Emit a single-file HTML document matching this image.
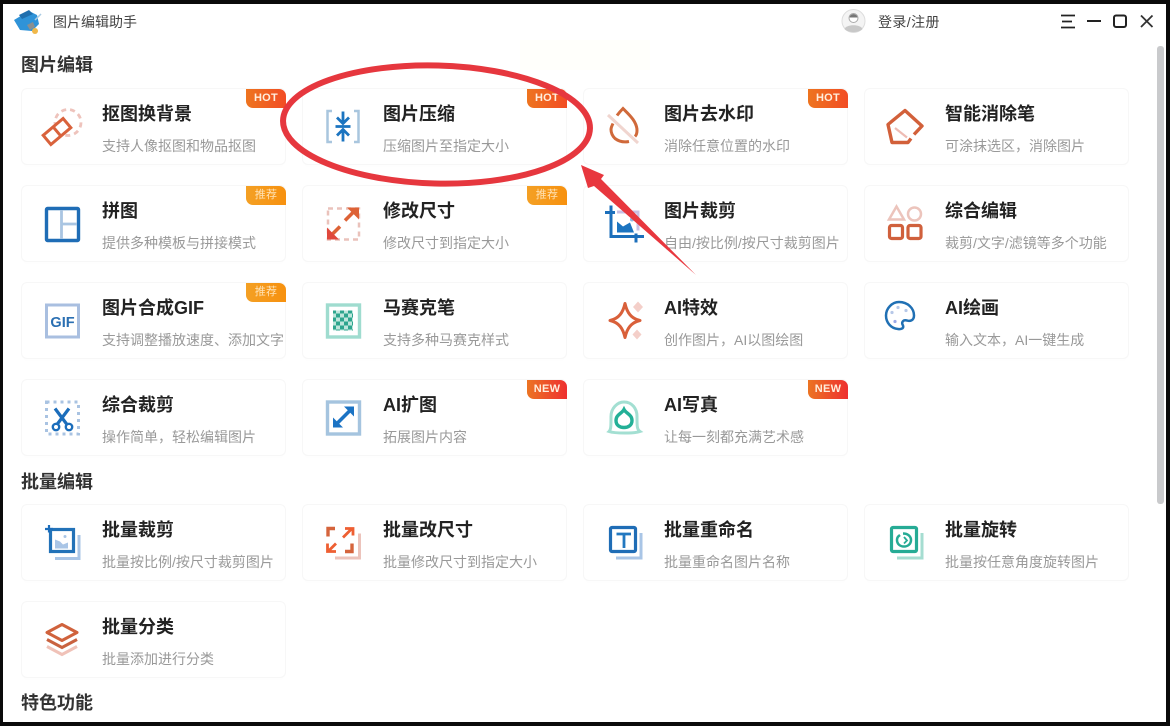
<!DOCTYPE html>
<html lang="zh"><head><meta charset="utf-8"><title>图片编辑助手</title>
<style>
*{margin:0;padding:0;box-sizing:border-box}
html,body{width:1170px;height:726px;overflow:hidden;background:#0a0a0a}
body{position:relative;font-family:"Liberation Sans","Noto Sans CJK SC",sans-serif}
#wrap{position:absolute;left:0;top:0;width:1170px;height:726px;filter:blur(.3px)}
#win{position:absolute;left:3px;top:4px;width:1163px;height:718px;background:#fff}
#ghost{position:absolute;left:520px;top:40px;width:130px;height:30px;background:#fffffb}
.h{position:absolute;left:21px;font-size:18px;font-weight:700;color:#333;line-height:24px;white-space:nowrap}
.top{position:absolute;font-size:14px;color:#444;line-height:20px;top:12px;white-space:nowrap}
.c{position:absolute;width:265px;height:77px;border:1px solid #f7f7f7;border-radius:6px;background:#fff;box-shadow:0 2px 5px rgba(0,0,0,.008)}
.c b{position:absolute;left:80px;top:13px;font-size:18px;line-height:24px;color:#222;white-space:nowrap}
.c span{position:absolute;left:80px;top:47px;font-size:14px;line-height:20px;color:#999;white-space:nowrap}
.c i{position:absolute;right:-1px;top:0;width:40px;height:19px;border-radius:0 7px 0 7px;font-style:normal;text-align:center;font-size:11px;font-weight:700;line-height:19px;color:#ffeedd;letter-spacing:.3px}
.hot{background:linear-gradient(90deg,#ee741f,#f24d24)}
.c i.rec{background:linear-gradient(90deg,#f4a024,#f7910f);color:#ffe2b4;font-weight:400}
.new{background:linear-gradient(90deg,#ec7423,#ee3030)}
#bar{position:absolute;left:1157px;top:46px;width:7px;height:458px;background:#c9cacc;border-radius:3px}
svg{position:absolute;left:0;top:0}
</style></head><body>
<div id="wrap">
<div id="win"></div>
<div id="ghost"></div>
<div id="bar"></div>
<div class="top" style="left:53px">图片编辑助手</div>
<div class="top" style="left:878px;letter-spacing:.4px">登录/注册</div>
<div class="h" style="top:53px">图片编辑</div>
<div class="h" style="top:470px">批量编辑</div>
<div class="h" style="top:691px">特色功能</div>

<div class="c" style="left:21px;top:88px"><b>抠图换背景</b><span>支持人像抠图和物品抠图</span><i class="hot">HOT</i></div>
<div class="c" style="left:302px;top:88px"><b>图片压缩</b><span>压缩图片至指定大小</span><i class="hot">HOT</i></div>
<div class="c" style="left:583px;top:88px"><b>图片去水印</b><span>消除任意位置的水印</span><i class="hot">HOT</i></div>
<div class="c" style="left:864px;top:88px"><b>智能消除笔</b><span>可涂抹选区，消除图片</span></div>

<div class="c" style="left:21px;top:185px"><b>拼图</b><span>提供多种模板与拼接模式</span><i class="rec">推荐</i></div>
<div class="c" style="left:302px;top:185px"><b>修改尺寸</b><span>修改尺寸到指定大小</span><i class="rec">推荐</i></div>
<div class="c" style="left:583px;top:185px"><b>图片裁剪</b><span>自由/按比例/按尺寸裁剪图片</span></div>
<div class="c" style="left:864px;top:185px"><b>综合编辑</b><span>裁剪/文字/滤镜等多个功能</span></div>

<div class="c" style="left:21px;top:282px"><b>图片合成GIF</b><span>支持调整播放速度、添加文字</span><i class="rec">推荐</i></div>
<div class="c" style="left:302px;top:282px"><b>马赛克笔</b><span>支持多种马赛克样式</span></div>
<div class="c" style="left:583px;top:282px"><b>AI特效</b><span>创作图片，AI以图绘图</span></div>
<div class="c" style="left:864px;top:282px"><b>AI绘画</b><span>输入文本，AI一键生成</span></div>

<div class="c" style="left:21px;top:379px"><b>综合裁剪</b><span>操作简单，轻松编辑图片</span></div>
<div class="c" style="left:302px;top:379px"><b>AI扩图</b><span>拓展图片内容</span><i class="new">NEW</i></div>
<div class="c" style="left:583px;top:379px"><b>AI写真</b><span>让每一刻都充满艺术感</span><i class="new">NEW</i></div>

<div class="c" style="left:21px;top:504px"><b>批量裁剪</b><span>批量按比例/按尺寸裁剪图片</span></div>
<div class="c" style="left:302px;top:504px"><b>批量改尺寸</b><span>批量修改尺寸到指定大小</span></div>
<div class="c" style="left:583px;top:504px"><b>批量重命名</b><span>批量重命名图片名称</span></div>
<div class="c" style="left:864px;top:504px"><b>批量旋转</b><span>批量按任意角度旋转图片</span></div>

<div class="c" style="left:21px;top:601px"><b>批量分类</b><span>批量添加进行分类</span></div>

<svg width="1170" height="726" viewBox="0 0 1170 726" fill="none">
<defs><pattern id="ck" x="-1" y="-1" width="8" height="8" patternUnits="userSpaceOnUse"><rect width="4.500" height="4.500" fill="#2ea58e"/><rect x="4" y="4" width="4.500" height="4.500" fill="#2ea58e"/><rect x="4" width="4" height="4" fill="#bfe6dc"/><rect y="4" width="4" height="4" fill="#bfe6dc"/></pattern></defs>

<!-- logo -->
<path d="M14 20L29 11L37 15L39 24L32 31L20 30Z" fill="#2f93d8"/>
<path d="M19 15L29 10L33 14L22 19Z" fill="#1f6fae"/>
<path d="M27 25L33 22L35 27L30 30Z" fill="#8a8f90"/>
<circle cx="35" cy="31" r="3" fill="#f0b84a"/>
<path d="M35 20L41 14" stroke="#a9cbe3" stroke-width="1.500"/>
<!-- avatar -->
<circle cx="853.500" cy="21" r="11.500" fill="#f4f4f4" stroke="#ddd"/>
<path d="M844.500 29C846 24 861 24 862.500 29C859 33 848 33 844.500 29Z" fill="#c8c8c8"/>
<circle cx="853.500" cy="18" r="4.500" fill="#fff" stroke="#aaa" stroke-width="1"/>
<path d="M849.500 17.500C850 13 857 13 857.500 17.500Z" fill="#777"/>
<!-- window controls -->
<g stroke="#222" stroke-width="1.800">
<path d="M1061 15.500H1075M1062 21.500H1072M1061 27.500H1075"/>
<path d="M1087 21H1101" stroke-width="2"/>
<rect x="1114" y="15.500" width="12" height="11.500" rx="2" stroke-width="2"/>
<path d="M1141 15.500L1152.500 27M1152.500 15.500L1141 27" stroke="#333"/>
</g>

<!-- 抠图换背景 -->
<g transform="translate(62,126.500)">
<circle cx="6" cy="-4" r="13" stroke="#eec3bc" stroke-width="2.800" stroke-dasharray="5 4"/>
<g transform="rotate(-40 -5 5)" stroke="#d9623c" stroke-width="3" fill="#fff"><rect x="-18" y="-1" width="26" height="12"/><path d="M-5 -1V11"/></g>
</g>
<!-- 压缩 -->
<g transform="translate(343,126.500)">
<path d="M-11 -15.500H-15.500V15.500H-11M11 -15.500H15.500V15.500H11" stroke="#a9c6de" stroke-width="2.500"/>
<path d="M0 -15V-4M-6 -9L0 -3L6 -9M-7.500 0H7.500M0 15V4M-6 9L0 3L6 9" stroke="#1b74c0" stroke-width="2.800"/>
</g>
<!-- 去水印 -->
<g transform="translate(624,126.500)">
<path d="M-7 -11C-4 -15 -2 -17 -1 -18C5 -12 13 -5 13 4C13 7 12 9 11 10M5 15C0 16 -5 15 -9 12C-12 9 -13 6 -13 3C-13 1 -12 -1 -11 -3" stroke="#d0693a" stroke-width="3"/>
<path d="M-16 -11.500L14 16.500" stroke="#f0d5cf" stroke-width="3"/>
</g>
<!-- 消除笔 -->
<g transform="translate(905,126.500)">
<path d="M9 8L17 -0.500L0 -16L-17 -2L-13 16L3 16L6 12" stroke="#d2603a" stroke-width="3.400" stroke-linejoin="round"/>
<path d="M-10 1.500L2 11" stroke="#eebcb4" stroke-width="2.200"/>
</g>
<!-- 拼图 -->
<g transform="translate(62,224)">
<rect x="-15.500" y="-15.500" width="32" height="32" rx="1" stroke="#1f6db6" stroke-width="3.400"/>
<path d="M-0.500 -14V15M0 0H15" stroke="#a9c5e2" stroke-width="2.800"/>
</g>
<!-- 修改尺寸 -->
<g transform="translate(343,223.500)">
<rect x="-15" y="-15" width="31" height="31" stroke="#eac2bb" stroke-width="2.500" stroke-dasharray="5 4"/>
<path d="M2 -3L12 -13" stroke="#dd6236" stroke-width="3.500"/>
<path d="M4 -16H16V-4Z" fill="#dd6236"/>
<path d="M-3 3L-12 12" stroke="#dd6236" stroke-width="3.500"/>
<path d="M-16 4V16H-4Z" fill="#e0483c"/>
</g>
<!-- 图片裁剪 -->
<g transform="translate(624,223.500)">
<path d="M-13 -18V13H20" stroke="#1c6fbb" stroke-width="3"/>
<path d="M-19 -11H-9M12 10V19" stroke="#1c6fbb" stroke-width="3"/>
<path d="M-7 -11.500H14V7" stroke="#c9bfe4" stroke-width="3"/>
<path d="M-7 9V-2L-1 3L6 -1L10 9Z" fill="#1c74c0"/>
<circle cx="8" cy="-4" r="2" fill="#8fb7e3"/>
</g>
<!-- 综合编辑 -->
<g transform="translate(905,223.500)">
<path d="M-8.500 -17L-1 -4H-16Z" stroke="#ecc4bc" stroke-width="2.500"/>
<circle cx="9.500" cy="-9.500" r="6.500" stroke="#ecc4bc" stroke-width="2.500"/>
<rect x="-15.500" y="2" width="13" height="13" rx="2" stroke="#d0603c" stroke-width="3.200"/>
<rect x="3" y="2" width="13" height="13" rx="2" stroke="#d0603c" stroke-width="3.200"/>
</g>
<!-- GIF -->
<g transform="translate(62,320.500)">
<rect x="-15.500" y="-15.500" width="32" height="32" stroke="#a9bfe0" stroke-width="3"/>
<text x="0.500" y="6.500" text-anchor="middle" font-family="Liberation Sans" font-weight="700" font-size="14.500" fill="#2a6fb2">GIF</text>
</g>
<!-- 马赛克 -->
<g transform="translate(343,320.500)">
<rect x="-15.500" y="-15.500" width="32" height="32" stroke="#9fdccf" stroke-width="3.400"/>
<g transform="translate(-10,-10)"><rect width="20" height="20" fill="url(#ck)"/></g>
</g>
<!-- AI特效 -->
<g transform="translate(625,320.500)">
<path d="M0 -17C2 -8 6 -2 15 0C6 2 2 8 0 17C-2 8 -6 2 -15 0C-6 -2 -2 -8 0 -17Z" stroke="#d9603a" stroke-width="3" stroke-linejoin="round"/>
<path d="M13 -19L18 -13.500L13 -8L8 -13.500Z M12 9L16.500 14L12 19L7.500 14Z" fill="#f4cfc9"/>
</g>
<!-- AI绘画 -->
<g transform="translate(900,315.500)">
<path d="M-1 -13.500C8 -13.500 14 -7 14 0C14 5 10 6 7 5C3 4 1 7 3 10C4 13 1 14 -2 13.500C-9 13 -14 7 -14 0C-14 -7 -8 -13.500 -1 -13.500Z" stroke="#2070b4" stroke-width="2.500"/>
<circle cx="-8" cy="-3" r="1.600" fill="#b7c8e8"/><circle cx="-2" cy="-8" r="1.600" fill="#b7c8e8"/><circle cx="6" cy="-5" r="1.600" fill="#b7c8e8"/><circle cx="-5" cy="6" r="1.600" fill="#9aa9e8"/>
</g>
<!-- 综合裁剪 -->
<g transform="translate(62,417.500)">
<rect x="-15.500" y="-15.500" width="32" height="32" stroke="#a9c3e2" stroke-width="3" stroke-dasharray="3 4"/>
<path d="M-7 -9L5 7M7 -9L-5 7" stroke="#1b6dbb" stroke-width="3.200"/>
<circle cx="-6" cy="9.500" r="3.200" stroke="#1b6dbb" stroke-width="2.400"/><circle cx="7" cy="9.500" r="3.200" stroke="#1b6dbb" stroke-width="2.400"/>
</g>
<!-- AI扩图 -->
<g transform="translate(343,417.500)">
<rect x="-15.500" y="-15.500" width="32" height="32" stroke="#a5c4df" stroke-width="3.400"/>
<path d="M-6 6L7 -7" stroke="#1b73c4" stroke-width="3.500"/>
<path d="M1 -11H11V-1Z M-10 0V10H0Z" fill="#1b73c4"/>
</g>
<!-- AI写真 -->
<g transform="translate(624,417.500)">
<path d="M-15 14C-13 12 -13 9 -13 -1C-13 -9 -7 -15.500 0 -15.500C8 -15.500 13 -9 13 -1C13 9 13 12 16 14C10 16 -9 16 -15 14Z" stroke="#a3dfd2" stroke-width="3"/>
<path d="M0 -8C2 -4 8 -3 8 3C8 8 4 10 0 10C-4 10 -8 8 -8 3C-8 -3 -2 -4 0 -8Z" stroke="#23b097" stroke-width="3.400"/>
</g>
<!-- 批量裁剪 -->
<g transform="translate(62,542.500)">
<path d="M-7 16H17V-7.500" stroke="#a9c5e6" stroke-width="3"/>
<rect x="-11.500" y="-13" width="23" height="22" stroke="#2272b8" stroke-width="3.200"/>
<path d="M-13 -17.500V-10M-17 -13.500H-9" stroke="#1b6dbb" stroke-width="2.200"/>
<path d="M-7 6V-3L-2 -1L1 2L6 0V6Z" fill="#a9c5e6"/><circle cx="3" cy="-6" r="1.500" fill="#a9c5e6"/>
</g>
<!-- 批量改尺寸 -->
<g transform="translate(343,542.500)">
<path d="M-8 15.500H16.500V-9" stroke="#ecc3bb" stroke-width="3"/>
<path d="M-8 -14H-15V-6M2 9H9V1" stroke="#d5643c" stroke-width="3.400"/>
<path d="M0 -5L9 -14M2 -14H10V-7" stroke="#ee5f32" stroke-width="2.800"/>
<path d="M-15.500 1V9H-7M-15 9L-7 1" stroke="#ee5f32" stroke-width="2.800"/>
</g>
<!-- 批量重命名 -->
<g transform="translate(624,542.500)">
<path d="M-8 15.500H17V-9.500" stroke="#a9c5e6" stroke-width="3"/>
<rect x="-13.500" y="-15" width="25" height="24" rx="1.500" stroke="#1f6db6" stroke-width="3.200"/>
<path d="M-7.500 -8.500H7M0 -8.500V5.500" stroke="#2278c0" stroke-width="2.800"/>
</g>
<!-- 批量旋转 -->
<g transform="translate(905,542.500)">
<path d="M-8 15.500H17V-9.500" stroke="#a5ddd1" stroke-width="3"/>
<rect x="-13.500" y="-15" width="25" height="24" rx="1.500" stroke="#26ab95" stroke-width="3.200"/>
<path d="M-2 -9C3 -9 6 -6 6 -2.500C6 1.500 3 4 -1 4C-5 4 -8 1.500 -8 -2.500C-8 -5 -7 -6 -5 -7.500" stroke="#26ab95" stroke-width="2.500"/>
<path d="M-1 -5.500L2 -2L-1 1" stroke="#26ab95" stroke-width="1.800"/>
</g>
<!-- 批量分类 -->
<g transform="translate(62,639.500)">
<path d="M0 -15L15 -7L0 1L-15 -7Z" stroke="#d0623c" stroke-width="3" stroke-linejoin="round"/>
<path d="M-15 0L0 8L15 0" stroke="#c9623f" stroke-width="3"/>
<path d="M-15 7L0 15L15 7" stroke="#f0c2b8" stroke-width="3"/>
</g>

<!-- annotation -->
<ellipse cx="436.500" cy="124.500" rx="153.500" ry="59" transform="rotate(1.500 436.500 124.500)" stroke="#e6373e" stroke-width="6"/>
<path d="M581 165L604 175L601 179L696 275L594 186L588 188Z" fill="#e8373e"/>
</svg>
</div>
</body></html>
